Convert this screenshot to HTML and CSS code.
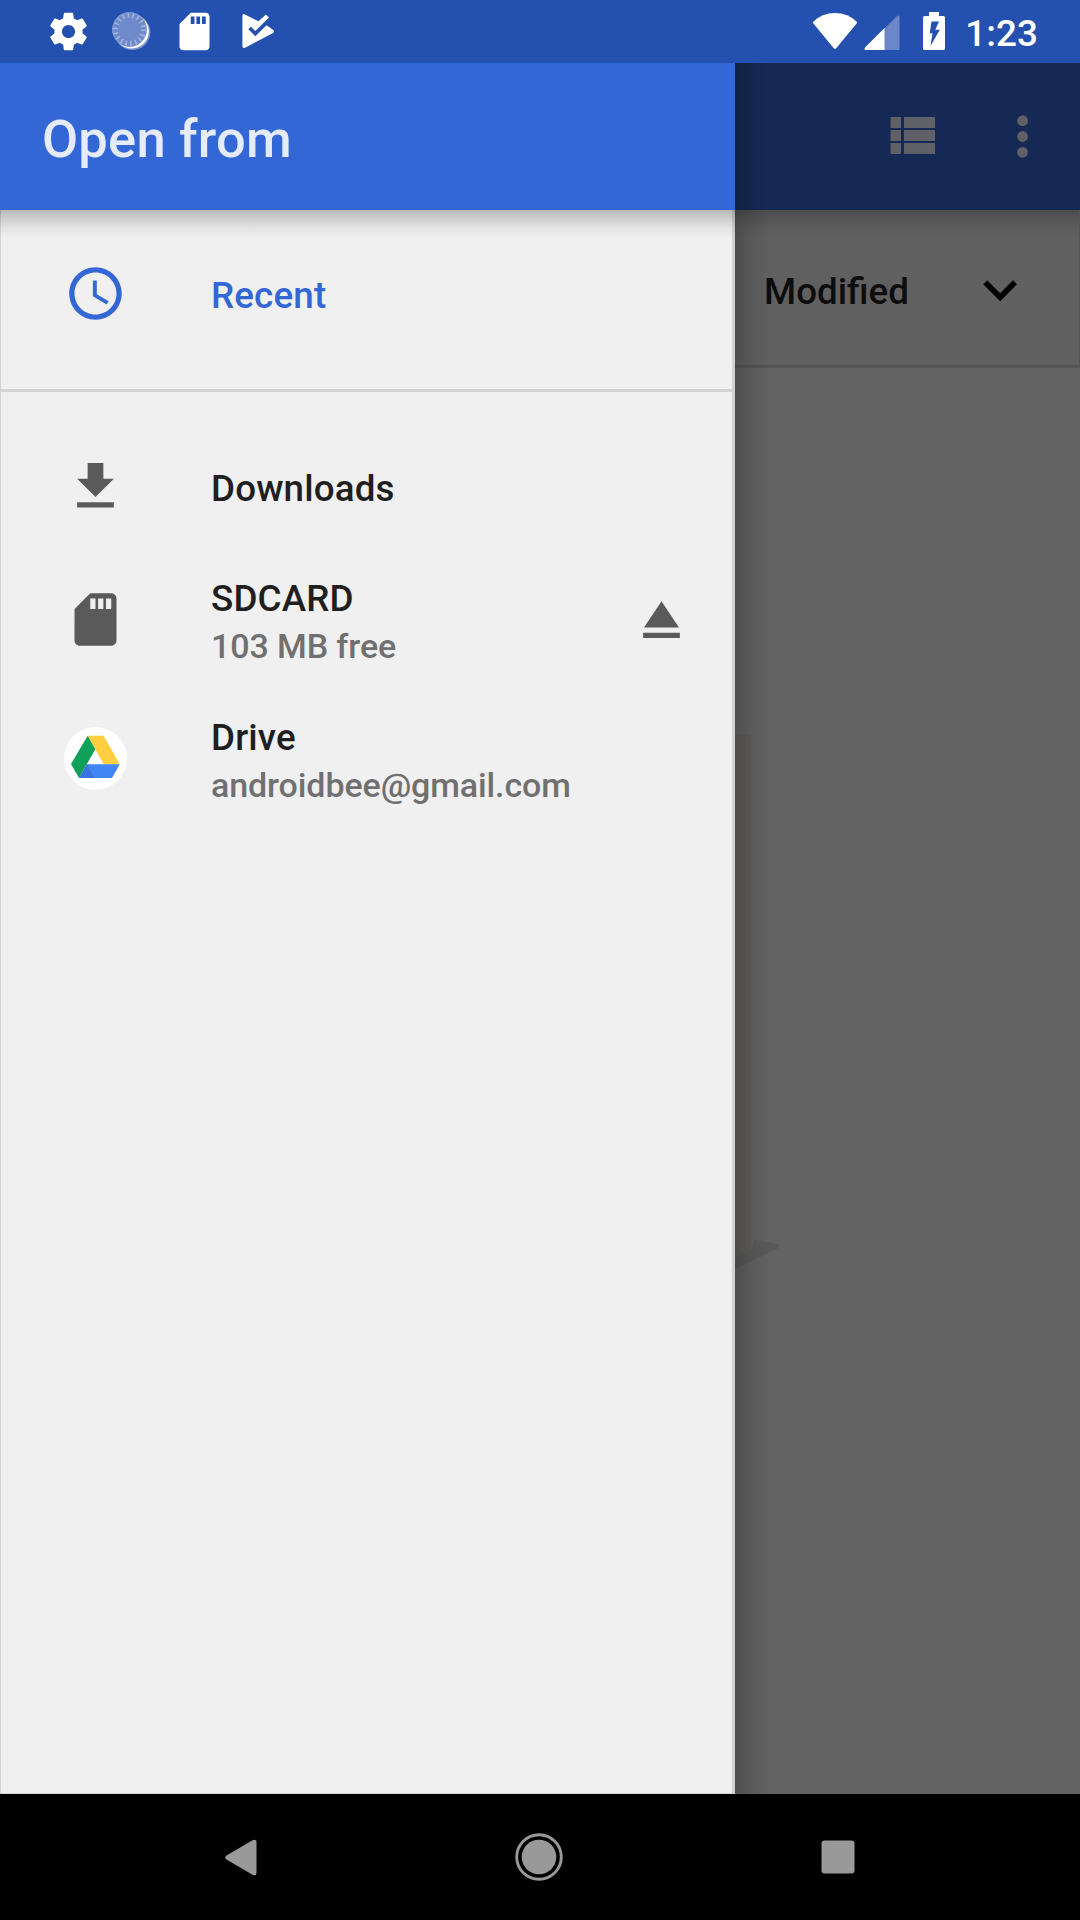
FILE: index.html
```html
<!DOCTYPE html>
<html lang="en">
<head>
<meta charset="utf-8">
<title>Open from</title>
<link rel="stylesheet" href="styles.css">
</head>
<body>
<div class="screen">
  <header class="status">
    <div class="status-left">
      <svg width="45" height="45" viewBox="0 0 24 24"><path fill="#fff" d="M19.43 12.98c.04-.32.07-.64.07-.98s-.03-.66-.07-.98l2.11-1.65c.19-.15.24-.42.12-.64l-2-3.46c-.12-.22-.39-.3-.61-.22l-2.49 1c-.52-.4-1.08-.73-1.69-.98l-.38-2.65C14.46 2.18 14.25 2 14 2h-4c-.25 0-.46.18-.49.42l-.38 2.65c-.61.25-1.17.59-1.69.98l-2.49-1c-.23-.09-.49 0-.61.22l-2 3.46c-.13.22-.07.49.12.64l2.11 1.65c-.04.32-.07.65-.07.98s.03.66.07.98l-2.11 1.65c-.19.15-.24.42-.12.64l2 3.46c.12.22.39.3.61.22l2.49-1c.52.4 1.08.73 1.69.98l.38 2.65c.03.24.24.42.49.42h4c.25 0 .46-.18.49-.42l.38-2.65c.61-.25 1.17-.59 1.69-.98l2.49 1c.23.09.49 0 .61-.22l2-3.46c.12-.22.07-.49-.12-.64l-2.11-1.65zM12 15.5c-1.93 0-3.5-1.57-3.5-3.5s1.57-3.5 3.5-3.5 3.5 1.57 3.5 3.5-1.57 3.5-3.5 3.5z"/></svg>
      <svg width="45" height="45" viewBox="0 0 45 45"><circle cx="23.500" cy="23.300" r="17.800" fill="#7590cc"/><circle cx="22.500" cy="22.300" r="17.300" fill="#fff"/><circle cx="20.500" cy="20.500" r="17.300" fill="#6f8aca"/><circle cx="20.500" cy="20.500" r="14" fill="none" stroke="#a3b4de" stroke-width="5" stroke-dasharray="1.600 3.287"/><circle cx="20.500" cy="20.500" r="17" fill="none" stroke="#8ca2d5" stroke-width=".7"/></svg>
      <svg width="45" height="45" viewBox="0 0 24 24"><path fill="#fff" d="M18 2h-8L4.020 8 4 20c0 1.100.9 2 2 2h12c1.100 0 2-.9 2-2V4c0-1.100-.9-2-2-2zm-6 6h-2V4h2v4zm3 0h-2V4h2v4zm3 0h-2V4h2v4z"/></svg>
      <svg width="45" height="45" viewBox="0 0 45 45"><path fill="#fff" d="M10 5.400 23.500 12.300 31 5.500 34 8.400 20.300 22 16 17.700 13.300 20.300 20.300 27.300 31.500 16.300 37.700 20.500Q40.300 22.500 37.700 24.200L10 38.700Q7.400 39.500 7.400 37V7Q7.400 4.300 10 5.400Z"/></svg>
    </div>
    <div class="status-right">
      <svg width="46" height="38" viewBox="0 0 46 38"><path fill="#fff" d="M1.300 9.700Q10 1 23 1T44.700 9.700Q45.300 10.700 44.600 11.600L24.200 36.200Q23 37.500 21.800 36.200L1.400 11.600Q.7 10.700 1.300 9.700Z"/></svg>
      <svg class="signal" width="36" height="37" viewBox="0 0 36 37"><path fill="#6c87c8" d="M20 15 33 2Q35.500.5 35.500 3V34.500Q35.500 36 34 36H20Z"/><path fill="#fff" d="M20.500 14V36H2Q-.5 36 1 33.500Z"/></svg>
      <svg class="battery" width="22" height="38" viewBox="0 0 22 38"><path fill="#fff" fill-rule="evenodd" d="M6 0H16V4H20.500Q22 4 22 5.500V36.500Q22 38 20.500 38H1.500Q0 38 0 36.500V5.500Q0 4 1.500 4H6ZM8.500 9.500 6.700 21.300H9.500L7.500 34 16.800 17.800H12.300L16 9.500Z"/></svg>
      <span class="clock">1:23</span>
    </div>
  </header>

  <main class="content">
    <aside class="drawer">
      <h1 class="title">Open from</h1>
      <nav class="roots">
        <a class="root active">
          <svg width="63" height="63" viewBox="0 0 24 24"><path d="M11.990 2C6.470 2 2 6.480 2 12s4.470 10 9.990 10C17.520 22 22 17.520 22 12S17.520 2 11.990 2zM12 20c-4.420 0-8-3.580-8-8s3.580-8 8-8 8 3.580 8 8-3.580 8-8 8z"/><path d="M12.500 7H11v6l5.250 3.150.75-1.230-4.500-2.670z"/></svg>
          <span class="label"><b>Recent</b></span>
        </a>
        <hr>
        <a class="root downloads">
          <svg width="63" height="63" viewBox="0 0 24 24"><path d="M19 9h-4V3H9v6H5l7 7 7-7zM5 18v2h14v-2H5z"/></svg>
          <span class="label"><b>Downloads</b></span>
        </a>
        <a class="root tall">
          <svg width="63" height="63" viewBox="0 0 24 24"><path d="M18 2h-8L4.020 8 4 20c0 1.100.9 2 2 2h12c1.100 0 2-.9 2-2V4c0-1.100-.9-2-2-2zm-6 6h-2V4h2v4zm3 0h-2V4h2v4zm3 0h-2V4h2v4z"/></svg>
          <span class="label"><b>SDCARD</b><small>103 MB free</small></span>
          <svg width="63" height="63" viewBox="0 0 24 24"><path d="M5 17h14v2H5zm7-12L5.330 15h13.340z"/></svg>
        </a>
        <a class="root tall">
          <svg width="63" height="63" viewBox="0 0 63 63"><circle cx="31.500" cy="31.500" r="31.500" fill="#fff"/><path fill="#ffcf40" d="M23.700 8.700H39.700L55.700 37.300H39.700Z"/><path fill="#11a05a" d="M23.700 8.700 31.300 22.300 15 51 7 37Z"/><path fill="#4285f4" d="M23 37.300H55.700L48 51H15Z"/><path fill="#3a74e0" d="M23 37.300 30.500 51H15Z"/></svg>
          <span class="label"><b>Drive</b><small>androidbee@gmail.com</small></span>
        </a>
      </nav>
    </aside>

    <section class="page">
      <div class="toolbar">
        <svg width="46" height="38" viewBox="0 0 46 38"><path fill="#606166" d="M.6 0H11V11H.6ZM14 0H45V11H14ZM.6 13H11V24H.6ZM14 13H45V24H14ZM.6 26H11V37H.6ZM14 26H45V37H14Z"/></svg>
        <svg width="12" height="44" viewBox="0 0 12 44"><g fill="#606166"><circle cx="6.600" cy="5.700" r="5.400"/><circle cx="6.600" cy="21.500" r="5.400"/><circle cx="6.600" cy="37.300" r="5.400"/></g></svg>
      </div>
      <div class="sort">
        <span>Modified</span>
        <svg width="34" height="22" viewBox="0 0 34 22"><path fill="none" stroke="#000" stroke-width="5.600" d="M2.200 2.200 17.200 17.200 32 2.200"/></svg>
      </div>
      <div class="empty">
        <svg width="46" height="550" viewBox="0 0 46 550"><path fill="#5f5e5c" d="M0 0H12Q16.500 0 16.500 4V517L0 526Z"/><path fill="#5a5a5a" d="M0 523 15 516Q17.500 515 17.500 512V509Q17.500 504.500 21 504.700L44 509.500V513L0 534.500Z"/></svg>
      </div>
    </section>
  </main>

  <footer class="navbar">
    <svg width="32" height="37" viewBox="0 0 32 37"><path fill="#999" d="M1.500 16.500 27.500 1.200Q31.500-.5 31.500 3.500V33.500Q31.500 37.500 27.500 35.700L1.500 20.500Q-1 18.500 1.500 16.500Z"/></svg>
    <svg class="home" width="48" height="48" viewBox="0 0 48 48"><circle cx="24" cy="24" r="22.300" fill="none" stroke="#999" stroke-width="2.900"/><circle cx="24" cy="24" r="17.300" fill="#999"/></svg>
    <svg width="34" height="34" viewBox="0 0 34 34"><rect x=".5" y=".5" width="33" height="33" rx="3" fill="#999"/></svg>
  </footer>
</div>
</body>
</html>
```
FILE: styles.css
```css
* { box-sizing: border-box; }
body { margin: 0; font-family: Roboto, sans-serif; font-weight: 500; }
svg { display: block; flex: none; }

.screen { width: 1080px; height: 1920px; display: flex; flex-direction: column; overflow: hidden; }

.status { height: 63px; flex: none; background: #2450af; color: #fff; display: flex; justify-content: space-between; }
.status-left { display: flex; gap: 18px; padding: 9px 0 0 46px; }
.status-right { display: flex; align-items: flex-start; padding: 12px 42px 0 0; }
.signal { margin: 2px 0 0 6px; }
.battery { margin-left: 23px; }
.clock { font-size: 36.75px; line-height: 43px; margin-left: 20px; letter-spacing: .1px; }

.content { flex: 1; display: flex; min-height: 0; }

.drawer { width: 735px; display: flex; flex-direction: column; flex: none; }
.title { margin: 0; height: 147px; flex: none; padding: 3px 0 0 42px; background: #3367d6; color: #e6ebfa; font-size: 52.5px; font-weight: 500; line-height: 147px; letter-spacing: .2px; }
.roots { position: relative; flex: 1; padding-top: 20px; background: #f0f0f0; }
/* outline of the panel, under the header shadow */
.roots::before { content: ""; position: absolute; inset: 0; border: solid #d2d2d2; border-width: 0 3px 1px 1px; }
.roots::after { content: ""; position: absolute; inset: 0 0 auto; height: 28px; background: linear-gradient(rgba(0,0,0,.23), rgba(0,0,0,.15) 28%, rgba(0,0,0,.05) 65%, transparent); }
.root { height: 126px; display: flex; align-items: center; padding: 0 42px 0 64px; color: #1f1f1f; fill: #5a5a5a; }
.root.active { color: #3367d6; fill: #3367d6; }
.root.downloads { height: 127px; }
.root.tall { height: 139px; }
.label { flex: 1; margin-left: 84px; padding-top: 4px; display: flex; flex-direction: column; gap: 6px; }
.label b { font-size: 36.75px; line-height: 43px; font-weight: 500; letter-spacing: .15px; }
.label small { font-size: 34px; line-height: 40px; color: #707070; letter-spacing: -.1px; }
hr { height: 3px; margin: 33px 0 31px; border: 0; background: #d3d3d3; }

.page { position: relative; flex: 1; display: flex; flex-direction: column; background: #636363; }
.page::after { content: ""; position: absolute; inset: 0 auto 0 0; width: 36px; background: linear-gradient(90deg, rgba(0,0,0,.2), rgba(0,0,0,.09) 45%, transparent); }
.toolbar { height: 147px; flex: none; display: flex; align-items: flex-start; justify-content: flex-end; gap: 80px; padding: 54px 52px 0 0; background: #162955; }
.toolbar svg:last-child { margin-top: -2px; }
.sort { position: relative; height: 158px; flex: none; display: flex; justify-content: space-between; align-items: flex-start; padding: 60px 62px 0 29px; background: #606060; border-bottom: 3px solid #555; border-right: 1px solid #555; color: #0d0d0d; font-size: 36.75px; line-height: 43px; }
.sort svg { margin-top: 10px; }
.sort::after { content: ""; position: absolute; inset: 0 0 auto; height: 28px; background: linear-gradient(rgba(0,0,0,.2), rgba(0,0,0,.12) 30%, rgba(0,0,0,.04) 65%, transparent); }
.empty { padding-top: 367px; }

.navbar { height: 126px; flex: none; display: flex; align-items: center; justify-content: space-between; padding: 0 225px; background: #000; }
.home { margin-top: -1px; }
```
